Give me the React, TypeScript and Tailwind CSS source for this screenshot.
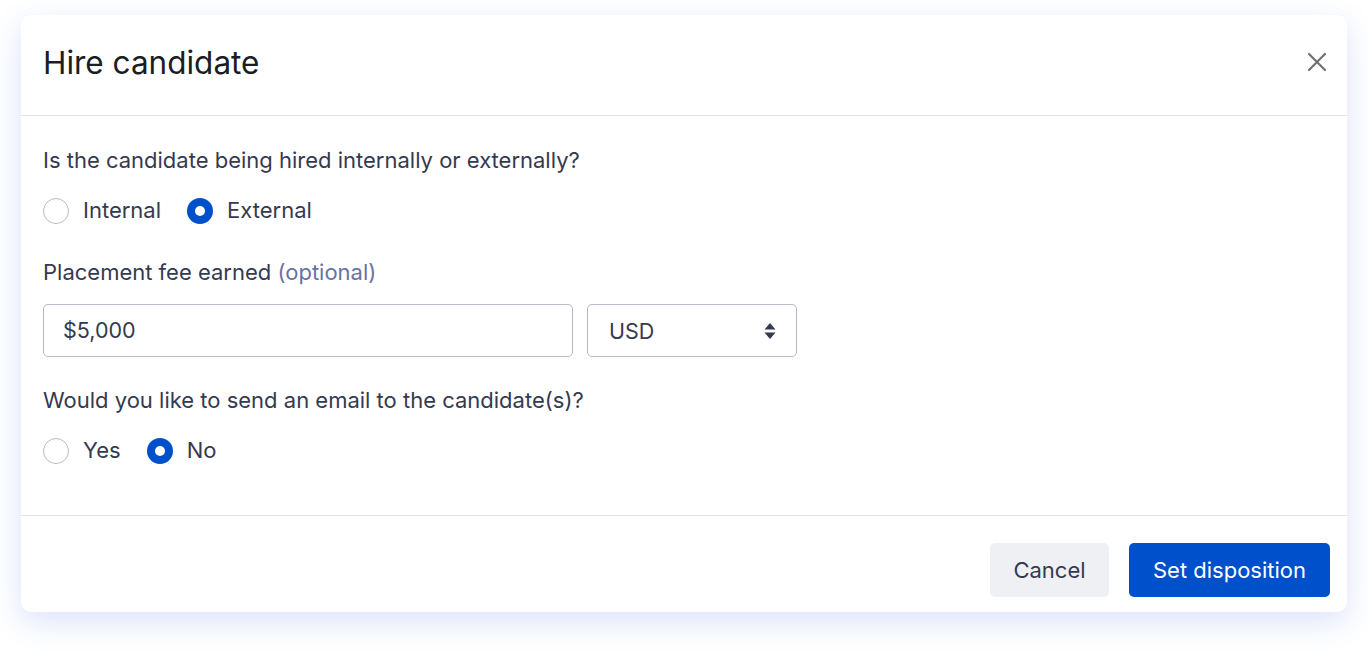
import React from "react";

function Radio({ label, checked }: { label: string; checked?: boolean }) {
  return (
    <label className="flex items-center gap-[14px]">
      {checked ? (
        <span className="flex h-[26px] w-[26px] items-center justify-center rounded-full bg-[#0050cb]">
          <span className="h-[10px] w-[10px] rounded-full bg-white" />
        </span>
      ) : (
        <span className="h-[26px] w-[26px] rounded-full border border-[#b9bcc6] bg-white" />
      )}
      <span className="text-[22px] text-[#353a4f]">{label}</span>
    </label>
  );
}

export default function App() {
  return (
    <div className="min-h-screen bg-white px-[21px] pt-[15px] font-['Inter',sans-serif]">
      <div className="rounded-[10px] bg-white shadow-[0_10px_30px_rgba(60,100,220,0.18)]">
        {/* header */}
        <div className="flex h-[101px] items-center justify-between border-b border-[#dfe1e6] pb-[5px] pl-[22px] pr-[19px]">
          <h1 className="text-[31.5px] text-[#1b1d24]">Hire candidate</h1>
          <button className="mb-[1px] text-[#6f7176]">
            <svg width="22" height="22" viewBox="0 0 22 22" fill="none" stroke="currentColor" strokeWidth="2.2" strokeLinecap="round">
              <path d="M3 3L19 19M19 3L3 19" />
            </svg>
          </button>
        </div>

        {/* body */}
        <div className="border-b border-[#dfe1e6] px-[22px] pb-[48px] pt-[30px]">
          <p className="text-[22px] leading-[28px] text-[#353a4f]">Is the candidate being hired internally or externally?</p>
          <div className="mt-[20px] flex gap-[26px]">
            <Radio label="Internal" />
            <Radio label="External" checked />
          </div>

          <p className="mt-[31px] text-[22px] leading-[28px] text-[#353a4f]">
            Placement fee earned <span className="text-[#6a72a3]">(optional)</span>
          </p>
          <div className="mt-[18px] flex gap-[14px]">
            <div className="flex h-[53px] w-[530px] items-center rounded-[5px] border border-[#b9bcc9] px-[19px] text-[21.5px] text-[#353a4f]">
              $5,000
            </div>
            <div className="flex h-[53px] w-[210px] items-center justify-between rounded-[5px] border border-[#b9bcc9] pl-[21px] pr-[20px] text-[21.5px] text-[#353a4f]">
              <span className="mt-[2px]">USD</span>
              <svg width="12" height="18" viewBox="0 0 12 18" fill="#353a4f">
                <path d="M6 1L11.5 7.5H0.5Z M6 17L11.5 10.5H0.5Z" />
              </svg>
            </div>
          </div>

          <p className="mt-[29px] text-[22px] leading-[28px] text-[#353a4f]">Would you like to send an email to the candidate(s)?</p>
          <div className="mt-[20px] flex gap-[26px]">
            <Radio label="Yes" />
            <Radio label="No" checked />
          </div>
        </div>

        {/* footer */}
        <div className="flex justify-end gap-[20px] pb-[15px] pr-[17px] pt-[27px]">
          <button className="h-[54px] w-[119px] rounded-[5px] bg-[#eef0f4] text-[22px] text-[#353a4f]">Cancel</button>
          <button className="h-[54px] w-[201px] rounded-[5px] bg-[#0050cb] text-[22px] text-white">Set disposition</button>
        </div>
      </div>
    </div>
  );
}
